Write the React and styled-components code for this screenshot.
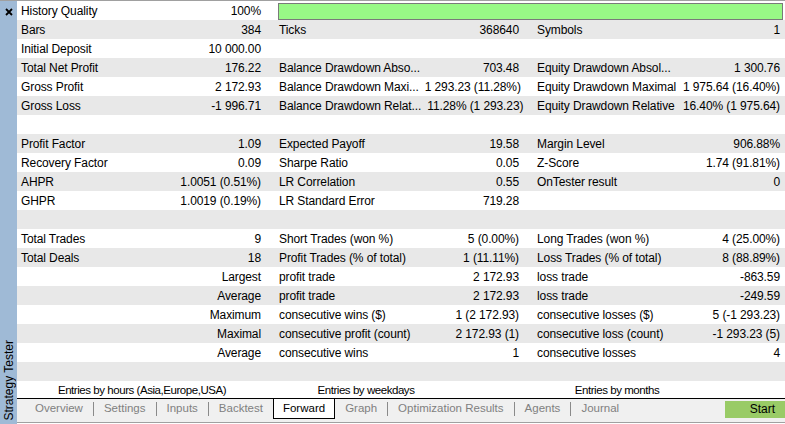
import React from "react"
import styled, { createGlobalStyle } from "styled-components"

const GlobalStyle = createGlobalStyle`
  html, body {
    margin: 0;
    padding: 0;
    background: #ffffff;
  }
  body {
    font-family: "Liberation Sans", Arial, sans-serif;
    font-size: 12px;
    color: #000;
  }
`

const rows = [
  null,
  [
    { l: "Bars", v: "384" },
    { l: "Ticks", v: "368640" },
    { l: "Symbols", v: "1" },
  ],
  [{ l: "Initial Deposit", v: "10 000.00" }, {}, {}],
  [
    { l: "Total Net Profit", v: "176.22" },
    { l: "Balance Drawdown Abso...", v: "703.48" },
    { l: "Equity Drawdown Absol...", v: "1 300.76" },
  ],
  [
    { l: "Gross Profit", v: "2 172.93" },
    { l: "Balance Drawdown Maxi...", v: "1 293.23 (11.28%)" },
    { l: "Equity Drawdown Maximal", v: "1 975.64 (16.40%)" },
  ],
  [
    { l: "Gross Loss", v: "-1 996.71" },
    { l: "Balance Drawdown Relat...", v: "11.28% (1 293.23)" },
    { l: "Equity Drawdown Relative", v: "16.40% (1 975.64)" },
  ],
  [{}, {}, {}],
  [
    { l: "Profit Factor", v: "1.09" },
    { l: "Expected Payoff", v: "19.58" },
    { l: "Margin Level", v: "906.88%" },
  ],
  [
    { l: "Recovery Factor", v: "0.09" },
    { l: "Sharpe Ratio", v: "0.05" },
    { l: "Z-Score", v: "1.74 (91.81%)" },
  ],
  [
    { l: "AHPR", v: "1.0051 (0.51%)" },
    { l: "LR Correlation", v: "0.55" },
    { l: "OnTester result", v: "0" },
  ],
  [
    { l: "GHPR", v: "1.0019 (0.19%)" },
    { l: "LR Standard Error", v: "719.28" },
    {},
  ],
  [{}, {}, {}],
  [
    { l: "Total Trades", v: "9" },
    { l: "Short Trades (won %)", v: "5 (0.00%)" },
    { l: "Long Trades (won %)", v: "4 (25.00%)" },
  ],
  [
    { l: "Total Deals", v: "18" },
    { l: "Profit Trades (% of total)", v: "1 (11.11%)" },
    { l: "Loss Trades (% of total)", v: "8 (88.89%)" },
  ],
  [
    { v: "Largest" },
    { l: "profit trade", v: "2 172.93" },
    { l: "loss trade", v: "-863.59" },
  ],
  [
    { v: "Average" },
    { l: "profit trade", v: "2 172.93" },
    { l: "loss trade", v: "-249.59" },
  ],
  [
    { v: "Maximum" },
    { l: "consecutive wins ($)", v: "1 (2 172.93)" },
    { l: "consecutive losses ($)", v: "5 (-1 293.23)" },
  ],
  [
    { v: "Maximal" },
    { l: "consecutive profit (count)", v: "2 172.93 (1)" },
    { l: "consecutive loss (count)", v: "-1 293.23 (5)" },
  ],
  [
    { v: "Average" },
    { l: "consecutive wins", v: "1" },
    { l: "consecutive losses", v: "4" },
  ],
  [{}, {}, {}],
]

const tabs = [
  "Overview",
  "Settings",
  "Inputs",
  "Backtest",
  "Forward",
  "Graph",
  "Optimization Results",
  "Agents",
  "Journal",
]
const activeTab = "Forward"

const Window = styled.div`
  width: 785px;
  height: 424px;
  display: flex;
  overflow: hidden;
  border-top: 1px solid #a0a0a0;
  box-sizing: border-box;
`

const Sidebar = styled.div`
  width: 17px;
  flex: none;
  background: #9fbad6;
  display: flex;
  flex-direction: column;
  align-items: center;
  justify-content: space-between;
  padding: 7px 0 4px;
  box-sizing: border-box;
`

const SideTitle = styled.div`
  writing-mode: vertical-rl;
  transform: rotate(180deg);
  white-space: nowrap;
  line-height: 16px;
`

const Main = styled.div`
  flex: 1;
  display: flex;
  flex-direction: column;
  min-width: 0;
`

const Row = styled.div`
  height: 19px;
  display: grid;
  grid-template-columns: 240px 240px 1fr;
  column-gap: 18px;
  padding: 0 5px 0 4px;
  align-items: center;
  background: ${({ shade }) => (shade ? "#e8e8e8" : "#ffffff")};
`

const Cell = styled.div`
  display: flex;
  justify-content: space-between;
  white-space: nowrap;
  line-height: 20px;
  letter-spacing: -0.1px;
  gap: 6px;
`

const Value = styled.span`
  margin-left: auto;
`

const QualityBar = styled.div`
  grid-column: 2 / 4;
  height: 15px;
  margin: 1px -3px 0 -1px;
  background: #98f986;
  border: 1px solid #7a7a7a;
`

const Entries = styled.div`
  height: 17px;
  display: grid;
  grid-template-columns: 250px 198px 304px;
  align-items: end;
  border-bottom: 1px solid #000;
  line-height: 16px;
  font-size: 11.5px;
  letter-spacing: -0.45px;
`

const EntryLabel = styled.div`
  text-align: center;
  white-space: nowrap;
`

const TabBar = styled.div`
  height: 23px;
  display: flex;
  align-items: flex-start;
  background: #f0f0f0;
  border-bottom: 1px solid #a0a0a0;
  padding-left: 8px;
  font-size: 11.5px;
`

const Tab = styled.div`
  height: ${({ active }) => (active ? "19px" : "20px")};
  line-height: 19px;
  padding: 0 ${({ active }) => (active ? "9px" : "10px")};
  color: ${({ active }) => (active ? "#000" : "#808080")};
  background: ${({ active }) => (active ? "#ffffff" : "transparent")};
  border: ${({ active }) => (active ? "1px solid #000" : "none")};
  border-top: none;
  white-space: nowrap;
`

const Separator = styled.div`
  width: 1px;
  height: 14px;
  margin-top: 3px;
  background: #8a8a8a;
`

const StartButton = styled.div`
  margin-left: auto;
  margin-top: 2px;
  width: 60px;
  height: 17px;
  line-height: 17px;
  background: #99cb66;
  text-align: right;
  padding-right: 10px;
  box-sizing: border-box;
  font-size: 12px;
`

function CloseIcon() {
  return (
    <svg width="8" height="8" viewBox="0 0 8 8">
      <path d="M1 1 L7 7 M7 1 L1 7" stroke="#000" strokeWidth="1.8" />
    </svg>
  )
}

function StatCell({ cell }) {
  if (!cell.l) {
    return (
      <Cell>
        <Value>{cell.v}</Value>
      </Cell>
    )
  }
  return (
    <Cell>
      <span>{cell.l}</span>
      <Value>{cell.v}</Value>
    </Cell>
  )
}

export default function App() {
  return (
    <>
      <GlobalStyle />
      <Window>
        <Sidebar>
          <CloseIcon />
          <SideTitle>Strategy Tester</SideTitle>
        </Sidebar>
        <Main>
          {rows.map((row, i) =>
            row === null ? (
              <Row key={i}>
                <StatCell cell={{ l: "History Quality", v: "100%" }} />
                <QualityBar />
              </Row>
            ) : (
              <Row key={i} shade={i % 2 === 1}>
                {row.map((cell, j) => (
                  <StatCell key={j} cell={cell} />
                ))}
              </Row>
            )
          )}
          <Entries>
            <EntryLabel>Entries by hours (Asia,Europe,USA)</EntryLabel>
            <EntryLabel>Entries by weekdays</EntryLabel>
            <EntryLabel>Entries by months</EntryLabel>
          </Entries>
          <TabBar>
            {tabs.map((t, i) => {
              const next = tabs[i + 1]
              const showSep =
                next && t !== activeTab && next !== activeTab
              return (
                <React.Fragment key={t}>
                  <Tab active={t === activeTab}>{t}</Tab>
                  {showSep && <Separator />}
                </React.Fragment>
              )
            })}
            <StartButton>Start</StartButton>
          </TabBar>
        </Main>
      </Window>
    </>
  )
}
